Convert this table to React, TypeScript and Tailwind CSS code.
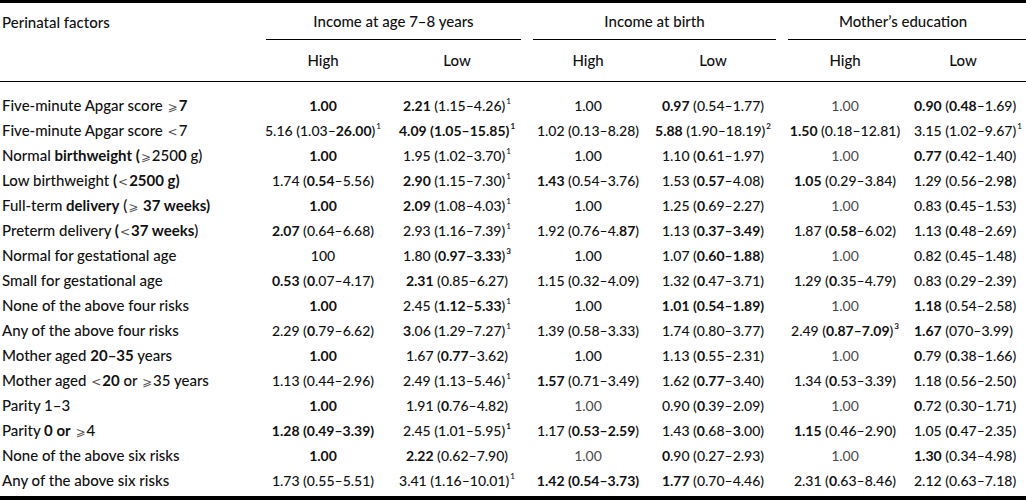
import React from "react";

const rows: string[][] = [
  ["Five-minute Apgar score ⩾*7*", "*1.00*", "*2.21* (1.15–4.26)^1", "1.00", "*0.97* (0.54–1.77)", "~1.00", "*0.90* (*0.48*–1.69)"],
  ["Five-minute Apgar score <7", "5.16 (1.03–*26.00*)^1", "*4.09 (1.05–15.85)^1*", "1.02 (0.13–8.28)", "*5.88* (1.90–18.19)*^2*", "*1.50* (0.18–12.81)", "3.15 (1.02–9.67)^1"],
  ["Normal *birthweight (*⩾250*0* g)", "*1.00*", "1.95 (1.02–3.70)^1", "1.00", "1.10 (*0*.61–1.97)", "~1.00", "*0.77* (*0*.42–1.40)"],
  ["Low birthweight *(*<*2500 g)*", "1.74 (*0.54*–5.56)", "*2.90* (1.15–7.30)^1", "*1.43* (0.54–3.76)", "1.53 (*0.57*–4.08)", "*1.05* (0.29–3.84)", "1.29 (0.56–2.9*8*)"],
  ["Full-term *delivery* (⩾ *37 weeks)*", "*1.00*", "*2.09* (1.08–4.03)^1", "1.00", "1.25 (*0*.69–2.27)", "~1.00", "0.83 (*0*.45–1.53)"],
  ["Preterm delivery *(*<*37 weeks*)", "*2.07* (0.64–6.68)", "2.93 (1.16–7.39)^1", "1.92 (0.76–4.*87*)", "1.13 (*0.37–3.49*)", "1.87 (*0.58*–6.02)", "1.13 (*0*.48–2.69)"],
  ["Normal for gestational age", "100", "1.80 (*0.97–3.33*)*^3*", "1.00", "1.07 (*0.60–1.88*)", "~1.00", "0.82 (0.45–1.48)"],
  ["Small for gestational age", "*0.53* (*0*.07–4.17)", "*2.31* (0.85–6.27)", "1.15 (0.32–4.09)", "1.32 (*0*.47–3.71)", "1.29 (*0*.35–4.79)", "0.83 (0.29–2.39)"],
  ["None of the above four risks", "*1.00*", "2.45 (*1.12–5.33*)^1", "1.00", "*1.01 (0.54–1.89)*", "~1.00", "*1.18* (0.54–2.58)"],
  ["Any of the above four risks", "2.29 (*0*.79–6.62)", "*3*.06 (1.29–7.27)^1", "1.39 (0.58–3.33)", "1.74 (0.80–3.77)", "2.49 (*0.87–7.09*)*^3*", "*1.67* (070–3.99)"],
  ["Mother aged *20–35* years", "*1.00*", "1.67 (*0.77*–3.62)", "1.00", "1.13 (*0*.55–2.31)", "~1.00", "*0*.79 (*0*.38–1.66)"],
  ["Mother aged <*20* or ⩾35 years", "1.13 (0.44–2.96)", "2.49 (1.13–5.46)^1", "*1.57* (0.71–3.49)", "1.62 (*0.77*–3.40)", "1.34 (*0*.53–3.39)", "1.18 (0.56–2.50)"],
  ["Parity 1–3", "*1.00*", "1.91 (*0*.76–4.82)", "~1.00", "0.90 (*0*.39–2.09)", "~1.00", "*0*.72 (0.30–1.71)"],
  ["Parity *0 or* ⩾4", "*1.28 (0.49–3.39)*", "2.45 (1.01–5.95)*^1*", "1.17 (*0.53–2.59*)", "1.43 (*0*.68–*3*.00)", "*1.15* (0.46–2.90)", "1.05 (*0*.47–2.35)"],
  ["None of the above six risks", "*1.00*", "*2.22* (0.62–7.90)", "~1.00", "*0*.90 (0.27–2.93)", "~1.00", "*1.30* (0.34–4.98)"],
  ["Any of the above six risks", "1.73 (0.55–5.51)", "3.41 (1.16–10.01)^1", "*1.42 (0.54–3.73)*", "*1.77* (0.70–4.46)", "2.31 (*0*.63–8.46)", "2.12 (0.63–7.18)"],
];

function Rich({ text }: { text: string }) {
  const light = text.startsWith("~");
  const src = light ? text.slice(1) : text;
  const parts: React.ReactNode[] = [];
  let bold = false;
  let buf = "";
  let key = 0;
  const flush = () => {
    if (!buf) return;
    parts.push(
      <span key={key++} className={bold ? "font-bold" : ""}>
        {buf}
      </span>
    );
    buf = "";
  };
  for (let i = 0; i < src.length; i++) {
    const ch = src[i];
    if (ch === "*") {
      flush();
      bold = !bold;
    } else if (ch === "^") {
      flush();
      const d = src[i + 1];
      i++;
      parts.push(
        <sup key={key++} className={"text-[8px] top-[-0.85em] ml-[1px] " + (bold ? "font-bold" : "")}>
          {d}
        </sup>
      );
    } else if (ch === "⩾" || ch === "<") {
      flush();
      parts.push(
        <span key={key++} className="font-normal text-[#555] font-['DejaVu_Sans',sans-serif] text-[12px] mx-[1px]">
          {ch === "<" ? "<" : "⩾"}
        </span>
      );
    } else {
      buf += ch;
    }
  }
  flush();
  return <span className={light ? "text-[#4a4a4a] font-normal" : ""}>{parts}</span>;
}

export default function App() {
  const grid = "grid grid-cols-[258px_130px_138px_124px_126px_138px_98px]";
  return (
    <div className="w-[1026px] h-[501px] bg-white text-[#111] font-['Lato',sans-serif] font-medium text-[14px] leading-none">
      <div className="border-t-[3px] border-black" />
      <div className={grid + " h-[37px] items-center text-[15px]"}>
        <div className="pl-[2px] pt-[2px]">Perinatal factors</div>
        <div className="col-span-2 h-full flex flex-col ml-[8px] mr-[5px] border-b border-black">
          <div className="flex-1 flex items-center justify-center">Income at age 7–8 years</div>
        </div>
        <div className="col-span-2 h-full flex flex-col ml-[7px] border-b border-black">
          <div className="flex-1 flex items-center justify-center">Income at birth</div>
        </div>
        <div className="col-span-2 h-full flex flex-col ml-[12px] mr-[-14px] border-b border-black">
          <div className="flex-1 flex items-center justify-center pr-[8px]">Mother’s education</div>
        </div>
      </div>
      <div className={grid + " h-[42px] items-center border-b border-black text-[15px]"}>
        <div />
        <div className="text-center">High</div>
        <div className="text-center">Low</div>
        <div className="text-center">High</div>
        <div className="text-center">Low</div>
        <div className="text-center">High</div>
        <div className="text-center">Low</div>
      </div>
      <div className="pt-[11px] pb-[3px]">
        {rows.map((r, i) => (
          <div key={i} className={grid + " h-[25px] items-center"}>
            <div className="pl-[2px] whitespace-nowrap text-[15px]">
              <Rich text={r[0]} />
            </div>
            {r.slice(1).map((c, j) => (
              <div key={j} className="text-center whitespace-nowrap">
                <Rich text={c} />
              </div>
            ))}
          </div>
        ))}
      </div>
      <div className="border-t-[4px] border-black" />
    </div>
  );
}
